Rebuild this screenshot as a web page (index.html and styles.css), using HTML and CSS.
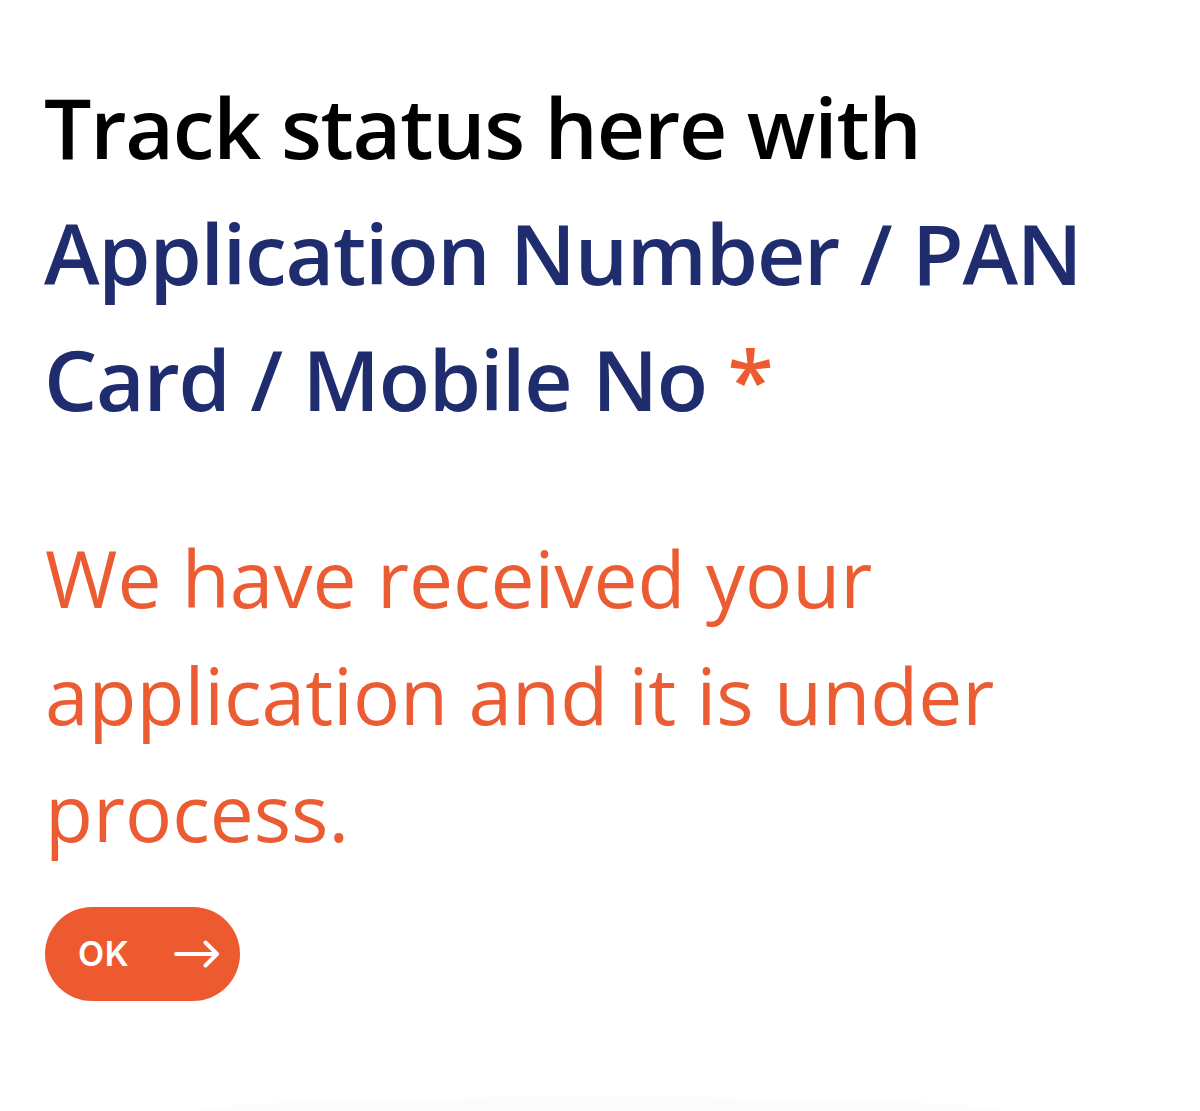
FILE: index.html
```html
<!DOCTYPE html>
<html lang="en">
<head>
<meta charset="utf-8">
<title>Track status</title>
<link rel="stylesheet" href="styles.css">
</head>
<body>
<main class="panel">
  <h1 class="title">Track status here with <span class="accent">Application Number / PAN Card / Mobile No</span> <span class="req">*</span></h1>
  <p class="message">We have received your application and it is under process.</p>
  <button class="ok-btn" type="button">
    <span class="ok-label">OK</span>
    <svg class="ok-arrow" width="46" height="28" viewBox="0 0 46 28" aria-hidden="true">
      <path d="M2 14H43M31.5 2.5L43 14L31.5 25.5" fill="none" stroke="#fff" stroke-width="4" stroke-linecap="round" stroke-linejoin="round"/>
    </svg>
  </button>
</main>
<div class="fade"></div>
</body>
</html>
```

FILE: styles.css
```css
html, body {
  margin: 0;
  padding: 0;
  background: #ffffff;
}

body {
  width: 1200px;
  height: 1111px;
  overflow: hidden;
  position: relative;
  font-family: "Open Sans", "Noto Sans", sans-serif;
}

.panel {
  padding: 64px 40px 0 44px;
  display: flex;
  flex-direction: column;
  align-items: flex-start;
}

.title {
  margin: 0;
  font-size: 84px;
  line-height: 126px;
  font-weight: 600;
  letter-spacing: -1.2px;
  color: #000000;
  max-width: 1090px;
}

.accent {
  color: #1f2d6e;
}

.req {
  color: #ee5a30;
}

.message {
  margin: 77px 0 0 1px;
  font-size: 78.4px;
  line-height: 117px;
  font-weight: 400;
  color: #ec5c33;
  max-width: 1000px;
}

.ok-btn {
  margin-top: 37px;
  margin-left: 1px;
  width: 195px;
  height: 94px;
  border: 0;
  border-radius: 47px;
  background: #ee5a30;
  display: flex;
  align-items: center;
  justify-content: flex-start;
  gap: 45px;
  padding: 0 0 0 33px;
  color: #fff;
}

.ok-label {
  font-family: "Inter", "Liberation Sans", sans-serif;
  font-weight: 600;
  font-size: 34px;
  letter-spacing: 0.5px;
  line-height: 1;
}

.ok-arrow {
  display: block;
}

.fade {
  position: absolute;
  left: 200px;
  right: 200px;
  bottom: 0;
  height: 14px;
  background: #fcfcfc;
  border-radius: 50% 50% 0 0 / 100% 100% 0 0;
}
```
